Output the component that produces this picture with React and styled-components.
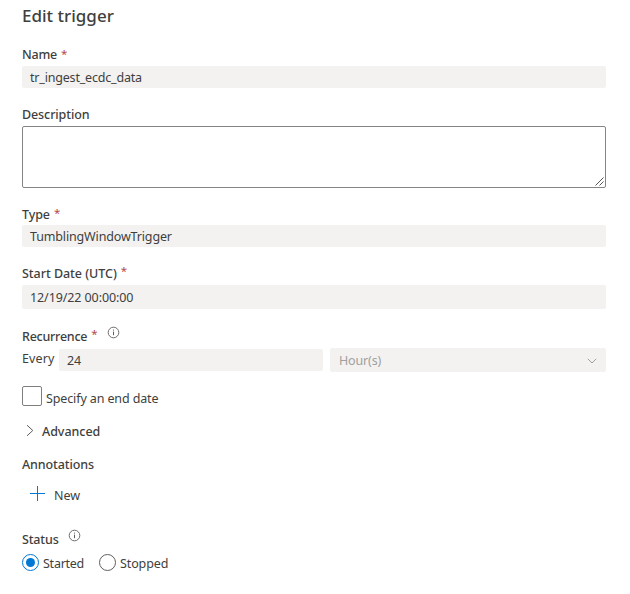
import React from "react";
import styled, { createGlobalStyle } from "styled-components";

const GlobalStyle = createGlobalStyle`
  * { box-sizing: border-box; }
  body { margin: 0; background: #fff; }
`;

const Panel = styled.main`
  width: 630px;
  height: 594px;
  padding: 4px 24px 0 22px;
  display: flex;
  flex-direction: column;
  background: #fff;
  color: #403f3e;
  font: 400 12.5px/20px "Noto Sans", "Open Sans", sans-serif;
  white-space: nowrap;
  overflow: hidden;
`;

const Title = styled.h1`
  margin: 0;
  font-size: 17px;
  font-weight: 500;
  line-height: 24px;
`;

const Field = styled.section`
  display: flex;
  flex-direction: column;
  gap: ${(p) => p.$gap ?? 1}px;
  margin-top: ${(p) => p.$top}px;
`;

const LabelRow = styled.div`
  display: flex;
  height: 20px;
`;

const Label = styled.span`
  font-weight: 500;
  letter-spacing: ${(p) => p.$track ?? -0.1}px;
`;

const Text = styled.span`
  letter-spacing: ${(p) => p.$track ?? -0.12}px;
`;

const Required = styled.span`
  margin-left: 4px;
  margin-top: ${(p) => p.$shift || 0}px;
  color: #b5484d;
  font-size: 11.5px;
`;

const ValueBox = styled.div`
  display: flex;
  align-items: center;
  width: ${(p) => (p.$width ? `${p.$width}px` : "100%")};
  height: ${(p) => p.$height || 22}px;
  padding: 2px 8px 0;
  border-radius: 2px;
  background: #f3f2f1;
`;

const SelectBox = styled(ValueBox)`
  justify-content: space-between;
  margin-left: 7px;
  padding: 2px 9px 0;
  color: #a19f9d;
`;

const DescriptionBox = styled.div`
  display: flex;
  align-items: flex-end;
  justify-content: flex-end;
  height: 62px;
  padding: 1px;
  border: 1px solid #868584;
  border-radius: 2px;
`;

const RecurrenceRow = styled.div`
  display: flex;
  align-items: center;
  height: 24px;
  margin-top: -1px;
`;

const Every = styled(Text)`
  width: 37px;
  margin-top: -2px;
`;

const Row = styled.div`
  display: flex;
  height: 20px;
  margin-top: ${(p) => p.$top}px;
  padding-left: ${(p) => p.$indent || 0}px;
`;

const Checkbox = styled.span`
  width: 20px;
  height: 20px;
  margin-right: 4px;
  border: 1px solid #7f7e7d;
  border-radius: 2px;
`;

const CheckLabel = styled(Text)`
  margin-top: 3px;
`;

const Radio = styled.span`
  display: flex;
  align-items: center;
  justify-content: center;
  width: 17px;
  height: 17px;
  margin: 0 4px 0 0;
  border: 1px solid ${(p) => (p.$checked ? "#0078d4" : "#605e5c")};
  border-radius: 50%;

  &::after {
    content: "";
    width: 9px;
    height: 9px;
    border-radius: 50%;
    background: ${(p) => (p.$checked ? "#0078d4" : "transparent")};
  }
`;

const Option = styled.div`
  display: flex;
  width: ${(p) => p.$width}px;
`;

const Icon = styled.svg`
  flex: none;
  margin: ${(p) => p.$margin || 0};
  fill: none;
  stroke: ${(p) => p.$color || "#605e5c"};
`;

const PlusIcon = styled(Icon)`
  margin-right: 9px;

  path {
    stroke: #0078d4;
  }
`;

const InfoIcon = ({ margin }) => (
  <Icon width="13" height="13" viewBox="0 0 13 13" $margin={margin}>
    <circle cx="6.5" cy="6.5" r="5.3" strokeWidth=".9" />
    <path d="M6.5 5.6v3.6M6.5 3.6v1" />
  </Icon>
);

export default function App() {
  return (
    <>
      <GlobalStyle />
      <Panel>
        <Title>Edit trigger</Title>

        <Field $top={17}>
          <LabelRow><Label $track={-0.2}>Name</Label><Required $shift={-1}>*</Required></LabelRow>
          <ValueBox><Text $track={-0.19}>tr_ingest_ecdc_data</Text></ValueBox>
        </Field>

        <Field $top={17}>
          <LabelRow><Label>Description</Label></LabelRow>
          <DescriptionBox>
            <Icon width="9" height="9" viewBox="0 0 9 9" $color="#555">
              <path d="M.5 8.5l8-8M4.5 8.5l4-4" />
            </Icon>
          </DescriptionBox>
        </Field>

        <Field $top={17} $gap={0}>
          <LabelRow><Label>Type</Label><Required $shift={-2}>*</Required></LabelRow>
          <ValueBox><Text $track={-0.15}>TumblingWindowTrigger</Text></ValueBox>
        </Field>

        <Field $top={17} $gap={1}>
          <LabelRow><Label $track={-0.04}>Start Date (UTC)</Label><Required $shift={-3}>*</Required></LabelRow>
          <ValueBox $height={24}><Text $track={-0.1}>12/19/22 00:00:00</Text></ValueBox>
        </Field>

        <Field $top={18} $gap={2}>
          <LabelRow>
            <Label $track={-0.25}>Recurrence</Label><Required $shift={-3}>*</Required>
            <InfoIcon margin="-1px 0 0 9px" />
          </LabelRow>
          <RecurrenceRow>
            <Every $track={0.15}>Every</Every>
            <ValueBox $width={264}><Text>24</Text></ValueBox>
            <SelectBox $width={276} $height={24}>
              <Text $track={-0.16}>Hour(s)</Text>
              <Icon width="10" height="6" viewBox="0 0 10 6" $color="#a19f9d">
                <path d="M.8.8L5 5 9.2.8" />
              </Icon>
            </SelectBox>
          </RecurrenceRow>
        </Field>

        <Row $top={14}><Checkbox /><CheckLabel>Specify an end date</CheckLabel></Row>

        <Row $top={16} $indent={4}>
          <Icon width="9" height="13" viewBox="0 0 9 13" $margin="2px 7px 0 0">
            <path d="M1 1.2L6.8 6.5 1 11.8" />
          </Icon>
          <Label $track={-0.04}>Advanced</Label>
        </Row>

        <Row $top={13}><Label>Annotations</Label></Row>

        <Row $top={11} $indent={8}>
          <PlusIcon width="15" height="15" viewBox="0 0 15 15">
            <path d="M7.5 0v15M0 7.5h15" />
          </PlusIcon>
          <Text $track={0}>New</Text>
        </Row>

        <Row $top={24}><Label $track={-0.15}>Status</Label><InfoIcon margin="-1px 0 0 9px" /></Row>

        <Row $top={4}>
          <Option $width={77}><Radio $checked /><Text $track={-0.25}>Started</Text></Option>
          <Option $width={80}><Radio /><Text>Stopped</Text></Option>
        </Row>
      </Panel>
    </>
  );
}
